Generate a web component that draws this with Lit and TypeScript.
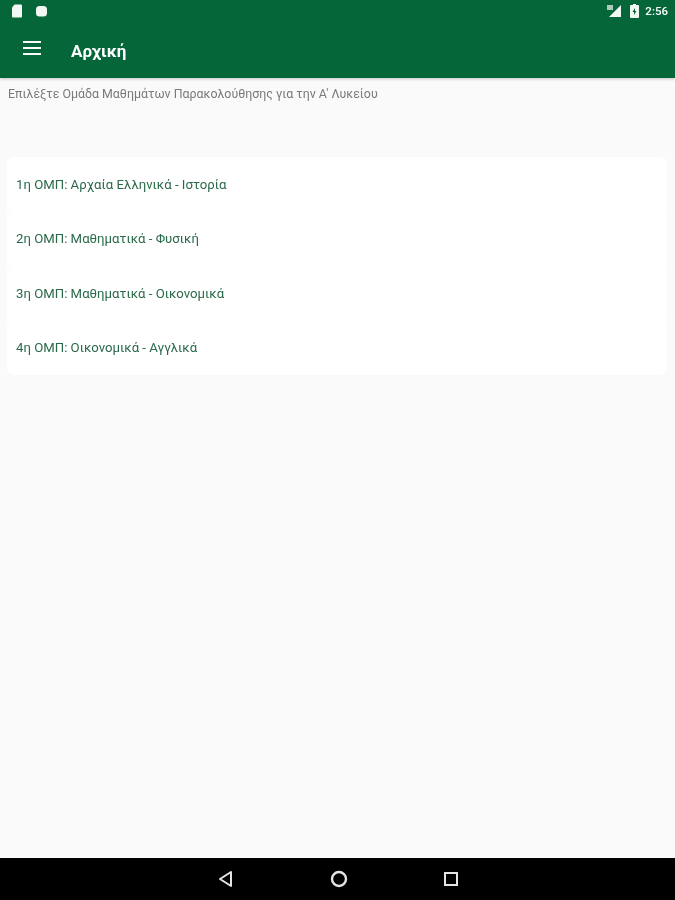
import { LitElement, html, css } from 'lit';
import { customElement } from 'lit/decorators.js';

const GROUPS = [
  '1η ΟΜΠ: Αρχαία Ελληνικά - Ιστορία',
  '2η ΟΜΠ: Μαθηματικά - Φυσική',
  '3η ΟΜΠ: Μαθηματικά - Οικονομικά',
  '4η ΟΜΠ: Οικονομικά - Αγγλικά',
];

@customElement('app-root')
export class AppRoot extends LitElement {
  static styles = css`
    :host {
      display: flex;
      flex-direction: column;
      height: 900px;
      background: #fafafa;
      font-family: Roboto, "Noto Sans", sans-serif;
      overflow: hidden;
    }
    .appbar {
      height: 78px;
      flex: none;
      background: #05663a;
      color: #fff;
      box-shadow: 0 1px 3px rgba(0, 0, 0, 0.22);
      display: flex;
      flex-direction: column;
    }
    .status {
      height: 22px;
      padding: 0 7px 0 11px;
      display: flex;
      align-items: center;
      gap: 12px;
      filter: blur(0.5px);
    }
    .status svg { display: block; }
    .spacer { flex: 1; }
    .status-right {
      display: flex;
      align-items: center;
      gap: 6px;
      font-size: 11.5px;
      font-weight: 500;
    }
    .signal { margin-right: 2px; }
    .toolbar {
      flex: 1;
      display: flex;
      align-items: center;
      padding-left: 23px;
      gap: 30px;
    }
    .menu { margin-bottom: 5px; }
    .title {
      font-size: 17px;
      font-weight: 700;
      margin-top: 1px;
      filter: blur(0.5px);
    }
    .main {
      flex: 1;
      display: flex;
      flex-direction: column;
      padding: 8px 8px 0 8px;
    }
    .hint {
      font-size: 12.4px;
      line-height: 15px;
      color: #7a7a7a;
      filter: blur(0.6px);
    }
    .list {
      margin: 56px 0 0 -1px;
      display: flex;
      flex-direction: column;
      background: #fdfdfd;
      border-radius: 8px;
    }
    .item {
      height: 54.5px;
      display: flex;
      align-items: center;
      padding-left: 9px;
      background: #fff;
      border-radius: 8px;
    }
    .label {
      font-size: 13.2px;
      color: #2a6a4a;
      filter: blur(0.6px);
    }
    .navbar {
      height: 42px;
      flex: none;
      background: #000;
      display: flex;
      align-items: center;
      justify-content: center;
      gap: 95px;
    }
    .navbar svg { display: block; filter: blur(0.4px); }
  `;

  render() {
    return html`
      <header class="appbar">
        <div class="status">
          <svg width="12" height="14" viewBox="0 0 12 14" fill="#f2f7f4">
            <path d="M3.5 0.5H10a1 1 0 0 1 1 1v11a1 1 0 0 1-1 1H2a1 1 0 0 1-1-1V3.5z" />
          </svg>
          <svg width="13" height="12" viewBox="0 0 13 12" fill="#f2f7f4">
            <rect x="1" y="1" width="11" height="10.5" rx="3.5" />
          </svg>
          <div class="spacer"></div>
          <div class="status-right">
            <svg class="signal" width="16" height="14" viewBox="0 0 16 14" fill="#f2f7f4">
              <path d="M15 1v12H3z" />
              <path d="M1 1h6v5H1z" opacity="0.7" />
            </svg>
            <svg width="9" height="14" viewBox="0 0 9 14" fill="#f2f7f4">
              <path d="M3 0h3v1h2a1 1 0 0 1 1 1v11a1 1 0 0 1-1 1H1a1 1 0 0 1-1-1V2a1 1 0 0 1 1-1h2z" />
              <path d="M5 4L2.5 8H4v3l2.5-4H5z" fill="#05663a" />
            </svg>
            <span>2:56</span>
          </div>
        </div>
        <div class="toolbar">
          <svg class="menu" width="18" height="14" viewBox="0 0 18 14" fill="#fff">
            <path d="M0 0h18v2H0zM0 6h18v2H0zM0 12h18v2H0z" />
          </svg>
          <span class="title">Αρχική</span>
        </div>
      </header>
      <main class="main">
        <div class="hint">Επιλέξτε Ομάδα Μαθημάτων Παρακολούθησης για την Α' Λυκείου</div>
        <div class="list">
          ${GROUPS.map((g) => html`<div class="item"><span class="label">${g}</span></div>`)}
        </div>
      </main>
      <nav class="navbar">
        <svg width="18" height="18" viewBox="0 0 18 18" fill="none" stroke="#e4e4e4" stroke-width="2" stroke-linejoin="round">
          <path d="M14 2v14L3 9z" />
        </svg>
        <svg width="18" height="18" viewBox="0 0 18 18" fill="none" stroke="#e4e4e4" stroke-width="2.4">
          <circle cx="9" cy="9" r="7" />
        </svg>
        <svg width="16" height="16" viewBox="0 0 16 16" fill="none" stroke="#e4e4e4" stroke-width="2">
          <path d="M2 2h12v12H2z" />
        </svg>
      </nav>
    `;
  }
}
